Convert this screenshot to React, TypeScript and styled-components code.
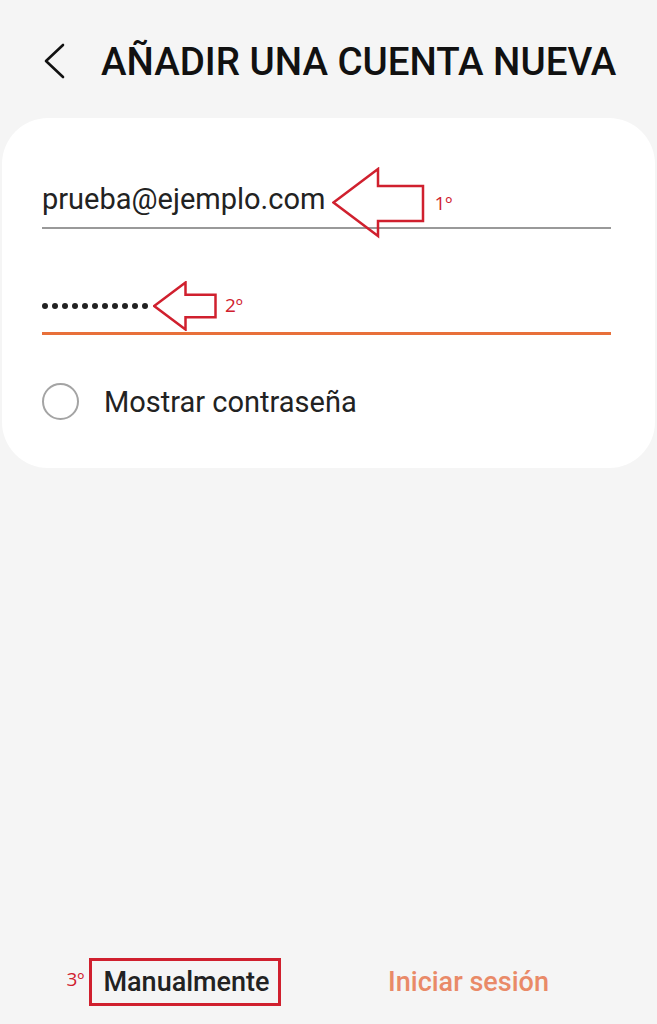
import React from "react";
import styled, { createGlobalStyle } from "styled-components";

const GlobalStyle = createGlobalStyle`
  *, *::before, *::after { box-sizing: border-box; }
  html, body { margin: 0; padding: 0; background: #f5f5f5; }
  body { font-family: Roboto, "Noto Sans", Arial, sans-serif; }
`;

const ANNOT = "#d0202e";

const Page = styled.div`
  min-height: 100vh;
  display: flex;
  flex-direction: column;
  background: #f5f5f5;
`;

const Header = styled.header`
  height: 118px;
  display: flex;
  align-items: center;
  gap: 34px;
  padding: 4px 0 0 37px;
`;

const BackButton = styled.button`
  display: flex;
  align-items: center;
  justify-content: center;
  width: 30px;
  height: 40px;
  padding: 0;
  border: 0;
  background: none;
  color: #111;
`;

const Title = styled.h1`
  margin: 0;
  font-size: 38.5px;
  font-weight: 500;
  color: #111;
  white-space: nowrap;
`;

const Card = styled.section`
  margin: 0 2px;
  background: #fff;
  border-radius: 46px;
  padding: 59px 44px 48px 40px;
  display: flex;
  flex-direction: column;
`;

const Field = styled.div<{ $active?: boolean; $gap?: number }>`
  height: 52px;
  margin-top: ${(p) => p.$gap ?? 0}px;
  display: flex;
  align-items: center;
  padding-bottom: ${(p) => (p.$active ? 4 : 6)}px;
  border-bottom: ${(p) => (p.$active ? "3px solid #e8703a" : "2px solid #999")};
`;

const Value = styled.span`
  font-size: 29px;
  color: #222;
  white-space: nowrap;
`;

const Dots = styled.span`
  display: flex;
  gap: 4px;
`;

const Dot = styled.span`
  width: 6px;
  height: 6px;
  border-radius: 50%;
  background: #222;
`;

const Annotation = styled.span<{ $shift: number; $lead: number }>`
  display: flex;
  align-items: center;
  gap: 8px;
  margin-left: ${(p) => p.$lead}px;
  margin-top: ${(p) => p.$shift}px;
`;

const AnnotLabel = styled.span`
  font-family: "Open Sans", "Liberation Sans", sans-serif;
  font-size: 19px;
  color: ${ANNOT};
  line-height: 1;
`;

const CheckRow = styled.label`
  margin-top: 48px;
  height: 37px;
  display: flex;
  align-items: center;
  gap: 25px;
`;

const Radio = styled.span`
  width: 37px;
  height: 37px;
  border-radius: 50%;
  border: 2px solid #a4a4a4;
  flex: none;
`;

const CheckText = styled.span`
  font-size: 29px;
  color: #222;
`;

const Spacer = styled.div`
  flex: 1;
`;

const Footer = styled.footer`
  display: grid;
  grid-template-columns: 1fr 1fr;
  align-items: center;
  padding: 0 49px 18px 44px;
`;

const FooterButton = styled.button<{ $accent?: boolean; $boxed?: boolean }>`
  position: relative;
  justify-self: center;
  height: 48px;
  padding: 0 8px 0 11px;
  background: none;
  border: ${(p) => (p.$boxed ? `3px solid ${ANNOT}` : "3px solid transparent")};
  font-family: Roboto, "Noto Sans", Arial, sans-serif;
  font-size: 27px;
  font-weight: 500;
  color: ${(p) => (p.$accent ? "#e98a68" : "#222")};
  white-space: nowrap;
`;

const StepTag = styled.span`
  position: absolute;
  right: calc(100% + 8px);
  top: 50%;
  transform: translateY(-62%);
  font-family: "Open Sans", "Liberation Sans", sans-serif;
  font-size: 19px;
  line-height: 1;
  color: ${ANNOT};
  font-weight: 400;
`;

const BigArrow = () => (
  <svg width="94" height="72" viewBox="0 0 94 72" fill="none">
    <polygon
      points="1.5,35.5 46,2 46,19 91,19 91,54 46,54 46,69"
      stroke={ANNOT}
      strokeWidth="2.5"
      strokeLinejoin="miter"
    />
  </svg>
);

const SmallArrow = () => (
  <svg width="64" height="50" viewBox="0 0 64 50" fill="none">
    <polygon
      points="1.2,25 32.5,1.5 32.5,13.8 62.5,13.8 62.5,36.2 32.5,36.2 32.5,48.5"
      stroke={ANNOT}
      strokeWidth="2.5"
      strokeLinejoin="miter"
    />
  </svg>
);

export default function App() {
  return (
    <>
      <GlobalStyle />
      <Page>
        <Header>
          <BackButton aria-label="Atrás">
            <svg width="30" height="40" viewBox="0 0 30 40" fill="none">
              <polyline
                points="26,4 9,20 26,36"
                stroke="#111"
                strokeWidth="2.6"
                strokeLinecap="round"
                strokeLinejoin="round"
              />
            </svg>
          </BackButton>
          <Title>AÑADIR UNA CUENTA NUEVA</Title>
        </Header>

        <Card>
          <Field>
            <Value>prueba@ejemplo.com</Value>
            <Annotation $lead={7} $shift={8}>
              <BigArrow />
              <AnnotLabel>1º</AnnotLabel>
            </Annotation>
          </Field>

          <Field $active $gap={54}>
            <Dots>
              {Array.from({ length: 11 }).map((_, i) => (
                <Dot key={i} />
              ))}
            </Dots>
            <Annotation $lead={5} $shift={0}>
              <SmallArrow />
              <AnnotLabel>2º</AnnotLabel>
            </Annotation>
          </Field>

          <CheckRow>
            <Radio />
            <CheckText>Mostrar contraseña</CheckText>
          </CheckRow>
        </Card>

        <Spacer />

        <Footer>
          <FooterButton $boxed>
            <StepTag>3º</StepTag>
            Manualmente
          </FooterButton>
          <FooterButton $accent>Iniciar sesión</FooterButton>
        </Footer>
      </Page>
    </>
  );
}
